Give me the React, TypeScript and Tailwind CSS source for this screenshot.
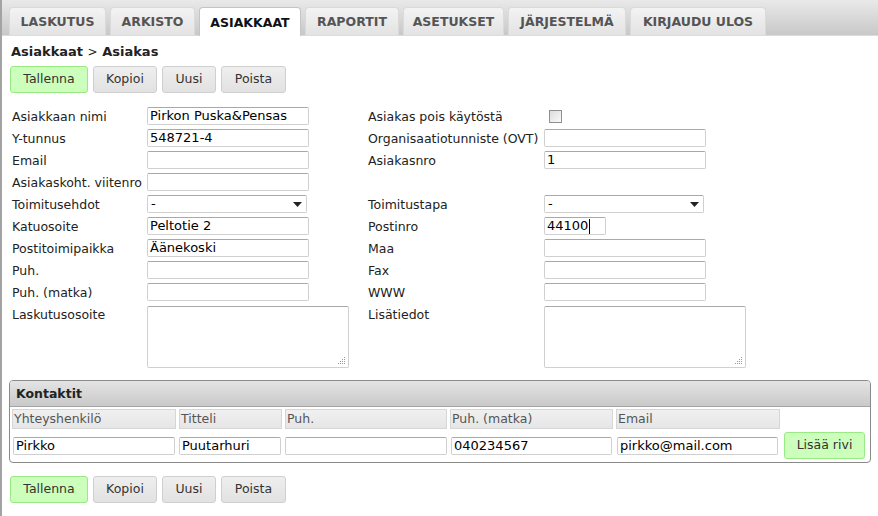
import React from "react";

const tabs: { t: string; w: string }[] = [
  { t: "LASKUTUS", w: "w-[97px]" },
  { t: "ARKISTO", w: "w-[85px]" },
  { t: "ASIAKKAAT", w: "w-[102px]" },
  { t: "RAPORTIT", w: "w-[94px]" },
  { t: "ASETUKSET", w: "w-[101px]" },
  { t: "JÄRJESTELMÄ", w: "w-[118px]" },
  { t: "KIRJAUDU ULOS", w: "w-[136px]" },
];

function Input({ value = "", w = "w-[162px]", caret = false }: { value?: string; w?: string; caret?: boolean }) {
  return (
    <div
      className={`${w} h-[18px] border border-[#d0d0d0] border-t-[#a9a9a9] rounded-[2px] bg-white px-[2px] text-[13px] leading-[16px] text-black whitespace-nowrap overflow-hidden flex items-center`}
    >
      <span>{value}</span>
      {caret && <span className="w-px h-[15px] bg-black ml-px" />}
    </div>
  );
}

function Select() {
  return (
    <div className="w-[160px] h-[18px] border border-[#d0d0d0] border-t-[#a9a9a9] rounded-[2px] bg-white pl-[3px] pr-[4px] text-[13px] leading-[16px] text-black flex items-center justify-between">
      <span>-</span>
      <svg width="9" height="5" viewBox="0 0 9 5">
        <path d="M0 0 H9 L4.5 5 Z" fill="#222" />
      </svg>
    </div>
  );
}

function TextArea() {
  return (
    <div className="relative w-[202px] h-[62px] border border-[#d0d0d0] border-t-[#a9a9a9] rounded-[2px] bg-white">
      <svg className="absolute right-[2px] bottom-[2px]" width="8" height="8" viewBox="0 0 8 8">
        <g fill="#999">
          <rect x="6" y="0" width="1" height="1" />
          <rect x="4" y="2" width="1" height="1" />
          <rect x="6" y="2" width="1" height="1" />
          <rect x="2" y="4" width="1" height="1" />
          <rect x="4" y="4" width="1" height="1" />
          <rect x="6" y="4" width="1" height="1" />
          <rect x="0" y="6" width="1" height="1" />
          <rect x="2" y="6" width="1" height="1" />
          <rect x="4" y="6" width="1" height="1" />
          <rect x="6" y="6" width="1" height="1" />
        </g>
      </svg>
    </div>
  );
}

function Btn({ label, green = false, w }: { label: string; green?: boolean; w: string }) {
  return (
    <div
      className={`${w} h-[27px] rounded-[3px] border flex items-center justify-center text-[12.5px] text-[#333] ${
        green
          ? "bg-[#ccffbb] border-[#99e985]"
          : "bg-gradient-to-b from-[#eeeeee] to-[#e2e2e2] border-[#cfcfcf]"
      }`}
    >
      {label}
    </div>
  );
}

function Buttons() {
  return (
    <div className="flex gap-[5px]">
      <Btn label="Tallenna" green w="w-[78px]" />
      <Btn label="Kopioi" w="w-[64px]" />
      <Btn label="Uusi" w="w-[54px]" />
      <Btn label="Poista" w="w-[65px]" />
    </div>
  );
}

function Label({ children }: { children: React.ReactNode }) {
  return <div className="h-[22px] leading-[22px] pt-px text-[12.5px] text-[#222] whitespace-nowrap">{children}</div>;
}

function Cell({ children }: { children: React.ReactNode }) {
  return <div className="h-[22px] flex items-center">{children}</div>;
}

export default function App() {
  return (
    <div className="w-[878px] h-[516px] overflow-hidden bg-white border-l-2 border-[#a3a3a3] font-['DejaVu_Sans',sans-serif]">
      {/* Tab bar */}
      <div className="h-[36px] bg-gradient-to-b from-[#e9e9e9] to-[#c8c8c8] border-b border-[#dcdcdc] flex items-end pl-[7px] gap-[4px]">
        {tabs.map(({ t, w }) => {
          const active = t === "ASIAKKAAT";
          return (
            <div
              key={t}
              className={`${w} pt-[2px] rounded-t-[4px] border border-b-0 flex items-center justify-center text-[12.5px] font-bold whitespace-nowrap ${
                active
                  ? "bg-white border-[#c4c4c4] text-[#111] -mb-px h-[29px]"
                  : "h-[28px] bg-gradient-to-b from-[#f3f3f3] to-[#e3e3e3] border-[#dadada] text-[#555]"
              }`}
            >
              {t}
            </div>
          );
        })}
      </div>

      <div className="pl-[8px] pt-[8px]">
        <div className="h-[16px] leading-[16px] pl-px text-[13px] font-bold text-[#222]">
          Asiakkaat <span className="font-normal text-[12px]">&gt;</span> Asiakas
        </div>
        <div className="mt-[6px]">
          <Buttons />
        </div>

        {/* Form */}
        <div className="mt-[12px] pl-[2px] grid grid-cols-[135px_221px_176px_1fr]">
          <Label>Asiakkaan nimi</Label>
          <Cell><Input value="Pirkon Puska&Pensas" /></Cell>
          <Label>Asiakas pois käytöstä</Label>
          <Cell>
            <div className="ml-[5px] w-[13px] h-[13px] border border-[#8f8f8f] bg-gradient-to-br from-[#dcdcdc] to-[#fafafa]" />
          </Cell>

          <Label>Y-tunnus</Label>
          <Cell><Input value="548721-4" /></Cell>
          <Label>Organisaatiotunniste (OVT)</Label>
          <Cell><Input /></Cell>

          <Label>Email</Label>
          <Cell><Input /></Cell>
          <Label>Asiakasnro</Label>
          <Cell><Input value="1" /></Cell>

          <Label>Asiakaskoht. viitenro</Label>
          <Cell><Input /></Cell>
          <div />
          <div />

          <Label>Toimitusehdot</Label>
          <Cell><Select /></Cell>
          <Label>Toimitustapa</Label>
          <Cell><Select /></Cell>

          <Label>Katuosoite</Label>
          <Cell><Input value="Peltotie 2" /></Cell>
          <Label>Postinro</Label>
          <Cell><Input value="44100" w="w-[62px]" caret /></Cell>

          <Label>Postitoimipaikka</Label>
          <Cell><Input value="Äänekoski" /></Cell>
          <Label>Maa</Label>
          <Cell><Input /></Cell>

          <Label>Puh.</Label>
          <Cell><Input /></Cell>
          <Label>Fax</Label>
          <Cell><Input /></Cell>

          <Label>Puh. (matka)</Label>
          <Cell><Input /></Cell>
          <Label>WWW</Label>
          <Cell><Input /></Cell>

          <Label>Laskutusosoite</Label>
          <div className="pt-[3px]"><TextArea /></div>
          <Label>Lisätiedot</Label>
          <div className="pt-[3px]"><TextArea /></div>
        </div>

        {/* Kontaktit */}
        <div className="mt-[12px] w-[862px] -ml-px h-[83px] border border-[#8a8a8a] rounded-[4px] overflow-hidden">
          <div className="h-[26px] bg-gradient-to-b from-[#e4e4e4] to-[#c9c9c9] border-b border-[#a5a5a5] flex items-center pl-[6px] pt-[2px] text-[12.5px] font-bold text-[#222]">
            Kontaktit
          </div>
          <div className="pl-[2px] pt-[2px] grid grid-cols-[164px_103px_162px_163px_164px_auto] gap-x-[3px] items-center">
            {["Yhteyshenkilö", "Titteli", "Puh.", "Puh. (matka)", "Email"].map((h) => (
              <div
                key={h}
                className="h-[20px] bg-gradient-to-b from-[#f0f0f0] to-[#e6e6e6] border border-[#d6d6d6] text-[12.5px] leading-[18px] text-[#555] pl-px"
              >
                {h}
              </div>
            ))}
            <div />
            <div className="pt-[4px] pl-px"><Input value="Pirkko" w="w-[162px]" /></div>
            <div className="pt-[4px]"><Input value="Puutarhuri" w="w-[102px]" /></div>
            <div className="pt-[4px]"><Input value="" w="w-[162px]" /></div>
            <div className="pt-[4px] pl-px"><Input value="040234567" w="w-[161px]" /></div>
            <div className="pt-[4px] pl-px"><Input value="pirkko@mail.com" w="w-[161px]" /></div>
            <div className="pt-[3px] pl-px">
              <Btn label="Lisää rivi" green w="w-[81px]" />
            </div>
          </div>
        </div>

        <div className="mt-[13px]">
          <Buttons />
        </div>
      </div>
    </div>
  );
}
